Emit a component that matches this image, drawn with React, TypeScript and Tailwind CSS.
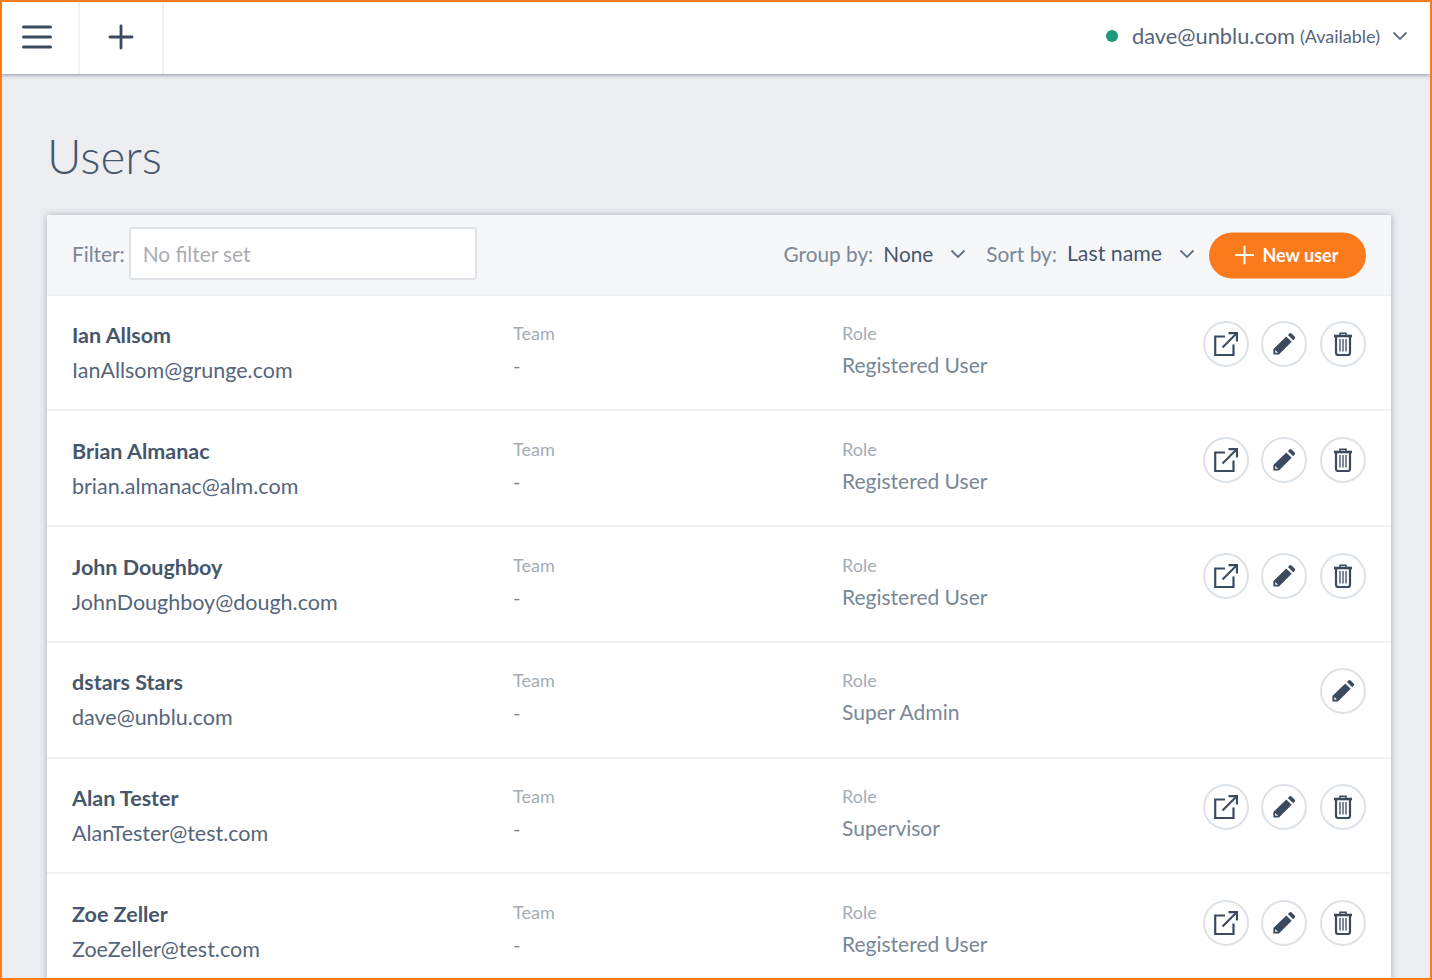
import React from "react";

const F = { fontFamily: 'Lato, "Noto Sans", sans-serif' };

function ExtIcon() {
  return (
    <svg width="24" height="24" viewBox="0 0 24 24" fill="none" stroke="#3b4a5f" strokeWidth="2.2">
      <path d="M11 4.5H1.2V23H19.5V12.5" />
      <path d="M8.5 15.5L22.5 1.5" />
      <path d="M14.5 1.2H23V9.5" />
    </svg>
  );
}
function PenIcon() {
  return (
    <svg width="24" height="24" viewBox="0 0 26 26" fill="#3b4a5f">
      <path d="M1.5 24.5V18.5L15.5 4.8L21.3 10.6L7.5 24.5Z" />
      <path d="M17.2 3.2L19.2 1.3Q20 .6 20.9 1.3L24.8 5.2Q25.5 6 24.8 6.9L23 8.9Z" />
      <path d="M3.5 19.5V22.5H6.5Z" fill="#fff" />
    </svg>
  );
}
function TrashIcon() {
  return (
    <svg width="20" height="24" viewBox="0 0 20 24" fill="none" stroke="#3b4a5f">
      <path d="M1 4H19" strokeWidth="2.6" />
      <path d="M7 3V1.2H13V3" strokeWidth="1.6" />
      <path d="M3 5V20.8Q3 23 5 23H15Q17 23 17 20.8V5" strokeWidth="2.2" />
      <path d="M7 7V19.5M10 7V19.5M13 7V19.5" strokeWidth="1.3" />
    </svg>
  );
}
function Chevron({ c = "#5f6f82" }: { c?: string }) {
  return (
    <svg width="16" height="10" viewBox="0 0 16 10" fill="none" stroke={c} strokeWidth="1.8">
      <path d="M1.5 1.5L8 8L14.5 1.5" />
    </svg>
  );
}
function Round({ children }: { children: React.ReactNode }) {
  return (
    <button className="flex h-[46px] w-[46px] items-center justify-center rounded-full border-2 border-[#dde2e7] bg-white">
      {children}
    </button>
  );
}

const users = [
  ["Ian Allsom", "IanAllsom@grunge.com", "Registered User", true],
  ["Brian Almanac", "brian.almanac@alm.com", "Registered User", true],
  ["John Doughboy", "JohnDoughboy@dough.com", "Registered User", true],
  ["dstars Stars", "dave@unblu.com", "Super Admin", false],
  ["Alan Tester", "AlanTester@test.com", "Supervisor", true],
  ["Zoe Zeller", "ZoeZeller@test.com", "Registered User", true],
] as const;

export default function App() {
  return (
    <div style={F} className="h-[980px] overflow-hidden border-2 border-[#fb7a1c] bg-[#eceef2]">
      <header className="relative flex h-[72px] items-stretch bg-white shadow-[0_1px_4px_rgba(60,70,85,0.55)]">
        <div className="flex w-[78px] items-center justify-center border-r-2 border-[#f1f2f4] pr-[6px] pb-[2px]">
          <svg width="30" height="26" viewBox="0 0 30 26" stroke="#3b4a5f" strokeWidth="3" strokeLinecap="round">
            <path d="M1.5 3H28.5M1.5 13H28.5M1.5 23H28.5" />
          </svg>
        </div>
        <div className="flex w-[84px] items-center justify-center border-r-2 border-[#f1f2f4] pb-[2px]">
          <svg width="26" height="26" viewBox="0 0 26 26" stroke="#3b4a5f" strokeWidth="2.8" strokeLinecap="round">
            <path d="M13 2V24M2 13H24" />
          </svg>
        </div>
        <div className="ml-auto flex items-center pr-[22px] pb-[4px] text-[#56657a]">
          <span className="mr-[14px] h-3 w-3 rounded-full bg-[#1f9a78]" />
          <span className="text-[21.8px]">dave@unblu.com</span>
          <span className="ml-[5px] text-[18px]">(Available)</span>
          <span className="ml-[12px]"><Chevron /></span>
        </div>
      </header>

      <main className="pl-[45px] pr-[39px]">
        <h1 className="mt-[50px] h-[64px] text-[47.5px] leading-[64px] font-light text-[#46566b]">Users</h1>
        <section className="mt-[27px] bg-white shadow-[0_0_7px_rgba(60,70,85,0.4)]">
          <div className="flex h-[80.5px] items-center border-b-2 border-[#eef0f2] bg-[#f6f7f9] pb-[1px] pl-[25px] pr-[25px] text-[20.8px] text-[#7a8796]">
            <span className="mr-[4px]">Filter:</span>
            <div className="flex h-[53px] w-[348px] items-center rounded-[3px] border-2 border-[#dfe3e7] bg-white pl-[12px] text-[#a9adb2]">
              No filter set
            </div>
            <div className="ml-auto flex items-center">
              <span>Group by:</span>
              <span className="ml-[10px] text-[#46566b]">None</span>
              <span className="ml-[17px] mr-[20px]"><Chevron /></span>
              <span>Sort by:</span>
              <span className="ml-[10px] text-[21.3px] text-[#46566b]">Last name</span>
              <span className="ml-[17px] mr-[14px]"><Chevron /></span>
              <button className="flex h-[46px] w-[157px] translate-y-[1.5px] items-center justify-center rounded-full bg-[#fb7a1c] pr-[2px] text-[18px] font-bold text-white">
                <svg width="19" height="19" viewBox="0 0 19 19" stroke="#fff" strokeWidth="2" className="mr-[9px]">
                  <path d="M9.5 0V19M0 9.5H19" />
                </svg>
                New user
              </button>
            </div>
          </div>
          {users.map(([name, mail, role, full]) => (
            <div key={name} className="flex h-[115.75px] border-b-2 border-[#eef0f2] pl-[25px] pr-[25px]">
              <div className="w-[441px] pt-[22.5px]">
                <div className="text-[21.5px] leading-[34px] font-bold text-[#46566b]">{name}</div>
                <div className="text-[21.5px] leading-[36px] text-[#56657a]">{mail}</div>
              </div>
              <div className="w-[329px] pt-[24.5px]">
                <div className="text-[18px] leading-[26px] text-[#a3acb6]">Team</div>
                <div className="mt-[5px] text-[20px] leading-[28px] text-[#7a8796]">-</div>
              </div>
              <div className="flex-1 pt-[24.5px]">
                <div className="text-[18px] leading-[26px] text-[#a3acb6]">Role</div>
                <div className="mt-[5px] text-[21px] leading-[28px] text-[#7a8796]">{role}</div>
              </div>
              <div className="flex items-start justify-end gap-[12px] pt-[25.5px]">
                {full && <Round><ExtIcon /></Round>}
                <Round><PenIcon /></Round>
                {full && <span className="ml-px"><Round><TrashIcon /></Round></span>}
              </div>
            </div>
          ))}
        </section>
      </main>
    </div>
  );
}
